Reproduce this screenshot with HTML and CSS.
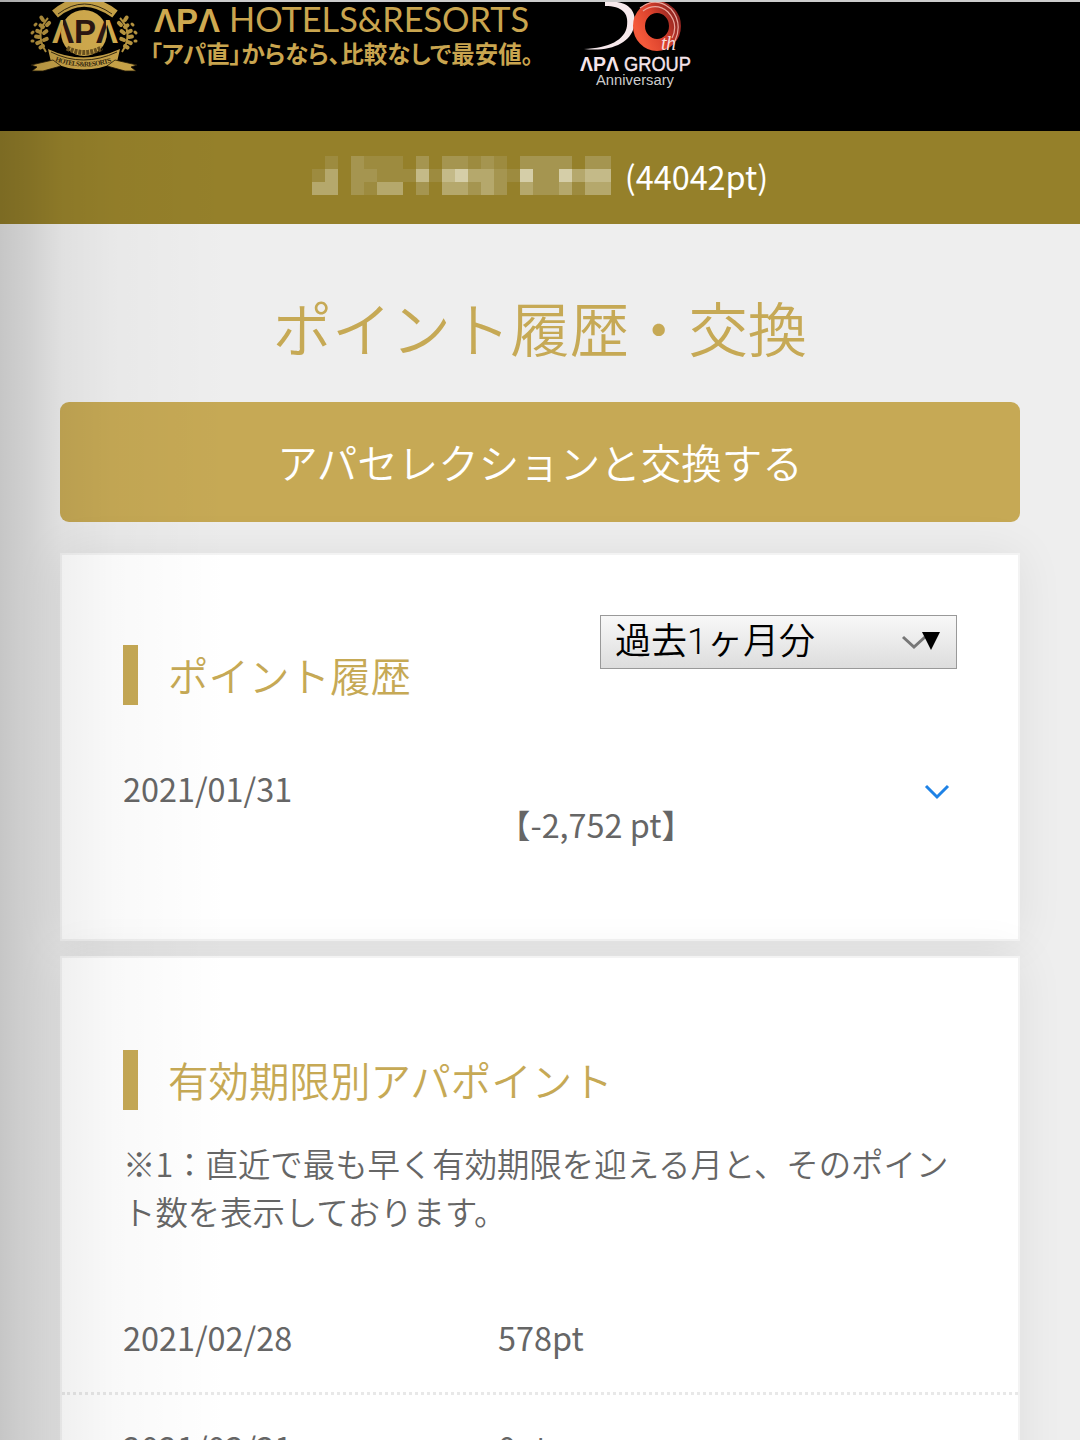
FILE: index.html
```html
<!DOCTYPE html>
<html lang="ja">
<head>
    <meta charset="utf-8">
    <title>ポイント履歴・交換</title>
    <meta name="viewport" content="width=device-width, initial-scale=1">
    <link rel="stylesheet" href="styles.css">
</head>
<body>
    <header class="header">
        <svg class="emblem" width="110" height="74" viewBox="0 0 110 74">
            <defs>
                <!-- letters are dark over the disc and gold outside it -->
                <linearGradient id="letters" gradientUnits="userSpaceOnUse" x1="0" y1="0" x2="110" y2="0">
                    <stop offset=".305" stop-color="#d5ae4f"/>
                    <stop offset=".305" stop-color="#2c1712"/>
                    <stop offset=".7" stop-color="#2c1712"/>
                    <stop offset=".7" stop-color="#d5ae4f"/>
                </linearGradient>
            </defs>
            <circle cx="55" cy="33" r="23" fill="#d5ae4f"/>
            <!-- top and bottom ribbons -->
            <path d="M26 14Q54 -10 86 14" fill="none" stroke="#c9a449" stroke-width="9"/>
            <path d="M29 14Q55 -6 83 14" fill="none" stroke="#3a2c10" stroke-width="1"/>
            <path d="M19 49Q54 66 91 49L88 62Q54 77 22 62Z" fill="#c9a449"/>
            <path d="M22 52Q54 68 88 52" fill="none" stroke="#3a2c10" stroke-width="1"/>
            <path d="M24 60L2 65L8 67L3 71H14L32 66ZM86 60L108 65L102 67L107 71H96L78 66Z" fill="#c9a449" stroke="#201606" stroke-width=".8"/>
            <!-- laurels -->
            <g fill="none" stroke="#b8953f">
                <path d="M19 18Q5 33 17 52M91 18Q105 33 93 52" stroke-width="2"/>
                <path d="M14 20L12 17M14 27L8 23M11 32L4 29M10 37L4 36M11 42L6 44M14 46L9 49M18 25L21 22M15 33L19 30M15 40L20 38" stroke-width="4" stroke-linecap="round" stroke-dasharray="3 5"/>
                <path d="M96 20L98 17M96 27L102 23M99 32L106 29M100 37L106 36M99 42L104 44M96 46L101 49M92 25L89 22M95 33L91 30M95 40L90 38" stroke-width="4" stroke-linecap="round" stroke-dasharray="3 5"/>
                <path d="M6 25L7 24M3 33L4 32M3 41L4 41M104 25L103 24M107 33L106 32M107 41L106 41" stroke-width="3" stroke-linecap="round"/>
            </g>
            <text class="mark" x="23" y="43" textLength="66" fill="url(#letters)" lengthAdjust="spacingAndGlyphs">ΛPΛ</text>
            <path d="M38 48Q55 57 73 48" fill="none" stroke="#6d5420" stroke-width="5" stroke-dasharray="3 1"/>
            <path id="ribbon" d="M26 61Q55 72 86 61" fill="none"/>
            <text class="ribbon-text"><textPath href="#ribbon" textLength="58">HOTELS&amp;RESORTS</textPath></text>
        </svg>
        <svg class="wordmark" width="396" height="74" viewBox="0 0 396 74">
            <text class="brand-apa" x="4" y="32" textLength="66" lengthAdjust="spacingAndGlyphs">ΛPΛ</text>
            <text class="brand" x="79" y="32" textLength="300" lengthAdjust="spacingAndGlyphs">HOTELS&amp;RESORTS</text>
            <text class="catch" x="0" y="63" textLength="388" lengthAdjust="spacingAndGlyphs" transform="scale(.988 1)">「アパ直」からなら、比較なしで最安値。</text>
        </svg>
        <svg class="anniversary" width="116" height="94" viewBox="0 0 116 94">
            <defs>
                <linearGradient id="red" x1="0" y1=".7" x2="1" y2=".2">
                    <stop offset="0" stop-color="#f4593a"/>
                    <stop offset=".5" stop-color="#d8402c"/>
                    <stop offset="1" stop-color="#8f2420"/>
                </linearGradient>
            </defs>
            <path d="M28 2L40 2C55 4 60 15 57 27C53 43 34 52 7 49C32 48 48 40 50 26C52 13 45 6 28 6Z" fill="#f7e9ec"/>
            <ellipse cx="80" cy="26" rx="18" ry="19" fill="none" stroke="url(#red)" stroke-width="12"/>
            <path d="M63 8Q79 -4 94 9Q106 23 98 41M66 11Q79 2 91 12Q102 24 95 38" fill="none" stroke="#e9a79d" stroke-width="1.2"/>
            <text class="th" x="84" y="50" textLength="15">th</text>
            <text class="group" x="3" y="71" textLength="39" lengthAdjust="spacingAndGlyphs">ΛPΛ</text>
            <text class="group thin" x="47" y="71" textLength="67" lengthAdjust="spacingAndGlyphs">GROUP</text>
            <text class="anniv" x="19" y="85" textLength="78" lengthAdjust="spacingAndGlyphs">Anniversary</text>
        </svg>
    </header>

    <div class="member">
        <!-- masked member name -->
        <svg class="mosaic" width="299" height="39" viewBox="0 0 23 3" shape-rendering="crispEdges">
            <path fill="#9d8b3f" d="M1 0h1v1h-1zM4 0h3v1h-3zM0 1h1v1h-1zM5 1h3v1h-3zM9 1h1v1h-1zM4 2h1v1h-1zM12 0h1v1h-1zM14 0h1v1h-1zM20 2h1v1h-1zM15 1h1v1h-1z"/>
            <path fill="#a59550" d="M3 0h1v3h-1zM4 1h1v1h-1zM8 0h1v1h-1zM10 0h2v1h-2zM13 0h1v1h-1zM16 0h4v1h-4zM21 0h2v1h-2zM8 2h1v1h-1zM14 1h1v2h-1zM17 1h2v2h-2zM12 2h1v1h-1z"/>
            <path fill="#b5a86c" d="M0 2h2v1h-2zM1 1h1v1h-1zM5 2h2v1h-2zM10 2h2v1h-2zM12 1h1v1h-1zM13 1h1v2h-1zM16 2h1v1h-1zM19 2h1v1h-1zM21 2h2v1h-2zM20 1h1v1h-1z"/>
            <path fill="#c4ba88" d="M8 1h1v1h-1zM10 1h1v1h-1zM21 1h2v1h-2z"/>
            <path fill="#d5cea8" d="M11 1h1v1h-1zM16 1h1v1h-1zM19 1h1v1h-1z"/>
        </svg>
        <span class="points">(44042pt)</span>
    </div>

    <main class="main">
        <h1 class="page-title">ポイント履歴・交換</h1>
        <a class="exchange-button">アパセレクションと交換する</a>

        <section class="card history">
            <div class="card-head">
                <h2 class="card-title">ポイント履歴</h2>
                <div class="period">
                    <span>過去1ヶ月分</span>
                    <svg width="40" height="24" viewBox="0 0 40 24">
                        <path d="M2 7L13 17L24 7" fill="none" stroke="#777" stroke-width="3"/>
                        <path d="M21 2H39L30 20Z" fill="#000"/>
                    </svg>
                </div>
            </div>
            <div class="history-row">
                <span class="date">2021/01/31</span>
                <span class="amount">【-2,752 pt】</span>
                <svg class="arrow" width="26" height="16" viewBox="0 0 26 16">
                    <path d="M2 2L13 13L24 2" fill="none" stroke="#1e82e6" stroke-width="3"/>
                </svg>
            </div>
        </section>

        <section class="card expiry">
            <h2 class="card-title">有効期限別アパポイント</h2>
            <p class="note">※1：直近で最も早く有効期限を迎える月と、そのポイント数を表示しております。</p>
            <div class="point-row">
                <span class="date">2021/02/28</span>
                <span>578pt</span>
            </div>
            <div class="point-row">
                <span class="date">2021/03/31</span>
                <span>0pt</span>
            </div>
        </section>
    </main>
    <div class="edge-shade"></div>
</body>
</html>
```

FILE: styles.css
```css
* {
    box-sizing: border-box;
}
body {
    margin: 0;
    height: 1440px;
    overflow: hidden;
    position: relative;
    background: #eee;
    color: #666;
    font-family: "Noto Sans CJK JP", sans-serif;
    font-size: 32.4px;
    line-height: 48px;
}
.header {
    height: 131px;
    background: #000;
    border-top: 2px solid #ccc;
    display: flex;
    padding-left: 29px;
}
.header svg {
    margin-top: -2px;
    flex: none;
    clip-path: inset(2px 0 0 0);
}
.wordmark {
    margin-left: 11px;
}
.anniversary {
    margin-left: 31px;
}
.mark {
    font: bold 33px "Liberation Sans", sans-serif;
}
.ribbon-text {
    font: bold 7px "Liberation Serif", serif;
    fill: #3a2c10;
}
.brand-apa {
    font: bold 34px "Liberation Sans", sans-serif;
    fill: #d0aa50;
}
.brand {
    font: 34px Lato, sans-serif;
    fill: #c9a54f;
}
.catch {
    font: bold 24px "Noto Sans CJK JP", sans-serif;
    font-feature-settings: "palt";
    fill: #c9a54f;
}
.th {
    font: italic 20px "Liberation Serif", serif;
    fill: #f5dcdc;
}
.group {
    font: bold 20px "Liberation Sans", sans-serif;
    fill: #f5e4ea;
}
.thin {
    font-weight: normal;
    stroke: #f5e4ea;
    stroke-width: .4px;
}
.anniv {
    font: 14px "Liberation Sans", sans-serif;
    fill: #ccc;
}
.member {
    height: 93px;
    padding-bottom: 4px;
    background: #95802a;
    color: #fff;
    display: flex;
    justify-content: center;
    align-items: center;
    gap: 14px;
}
.main {
    padding: 0 60px;
}
.page-title {
    margin: 0;
    padding-top: 58px;
    height: 178px;
    text-align: center;
    font-size: 59.4px;
    font-weight: 350;
    line-height: 88px;
    color: #c6a955;
}
.exchange-button {
    display: block;
    height: 120px;
    margin-bottom: 31px;
    border-radius: 9px;
    background: #c6a955;
    color: #fff;
    font-size: 40.5px;
    font-weight: 350;
    line-height: 120px;
    text-align: center;
}
.card {
    background: #fff;
    border: 2px solid #f3f3f3;
    padding: 0 61px;
    box-shadow: 0 0 45px rgba(0, 0, 0, .07);
}
.history {
    height: 388px;
    margin-bottom: 15px;
}
.expiry {
    height: 600px;
    padding: 92px 0 0;
}
.card-head {
    display: flex;
    justify-content: space-between;
    padding-top: 60px;
}
.card-title {
    margin: 30px 0 0;
    height: 60px;
    border-left: 15px solid #c6a955;
    padding-left: 30px;
    font-size: 40.5px;
    font-weight: 350;
    line-height: 60px;
    color: #c6a955;
}
.expiry .card-title {
    margin: 0 61px;
}
.period {
    width: 357px;
    height: 54px;
    border: 1px solid #999;
    background: linear-gradient(#f8f8f8, #ddd);
    color: #000;
    font-family: Roboto, "Noto Sans CJK JP", sans-serif;
    font-size: 36px;
    font-weight: 350;
    padding: 0 15px 0 14px;
    display: flex;
    justify-content: space-between;
    align-items: center;
}
.history-row {
    display: flex;
    margin-top: 59px;
}
.date {
    width: 375px;
}
.amount {
    margin-top: 36px;
    white-space: nowrap;
}
.arrow {
    margin: 20px 7px 0 auto;
}
.note {
    margin: 29px 61px 0;
    height: 96px;
    font-weight: 350;
}
.point-row {
    display: flex;
    height: 104px;
    padding: 28px 61px 0;
    border-bottom: 3px dotted #e8e8e8;
}
.note + .point-row {
    margin-top: 50px;
    height: 110px;
}
/* soft shade along the left edge */
.edge-shade {
    position: absolute;
    top: 0;
    left: 0;
    width: 230px;
    height: 1440px;
    background: linear-gradient(to right, rgba(0, 0, 0, .17), rgba(0, 0, 0, .12) 13%, rgba(0, 0, 0, .06) 27%, rgba(0, 0, 0, .025) 50%, rgba(0, 0, 0, 0));
}
```
